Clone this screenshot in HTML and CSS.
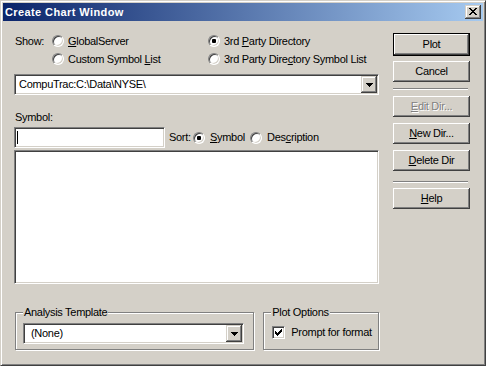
FILE: index.html
```html
<!DOCTYPE html>
<html>
<head>
<meta charset="utf-8">
<title>Create Chart Window</title>
<link rel="stylesheet" href="styles.css">
</head>
<body>
<div class="window">
  <div class="titlebar">
    <span class="title">Create Chart Window</span>
    <span class="tbtn"><svg width="8" height="7" viewBox="0 0 8 7" shape-rendering="crispEdges"><path fill="#000" d="M0 0h2v1h-2z M6 0h2v1h-2z M1 1h2v1h-2z M5 1h2v1h-2z M2 2h4v1h-4z M3 3h2v1h-2z M2 4h4v1h-4z M1 5h2v1h-2z M5 5h2v1h-2z M0 6h2v1h-2z M6 6h2v1h-2z"/></svg></span>
  </div>
  <div class="client">
    <div class="main">
      <div class="show">
        <span class="show-label">Show:</span>
        <span class="radio"><span class="rb"></span><span><u>G</u>lobalServer</span></span>
        <span class="radio"><span class="rb on"></span><span>3rd <u>P</u>arty Directory</span></span>
        <span></span>
        <span class="radio"><span class="rb"></span><span>Custom Symbol <u>L</u>ist</span></span>
        <span class="radio"><span class="rb"></span><span>3rd Party Dire<u>c</u>tory Symbol List</span></span>
      </div>
      <div class="combo wide">
        <span class="combo-text">CompuTrac:C:\Data\NYSE\</span>
        <span class="drop"><svg width="7" height="4" viewBox="0 0 7 4" shape-rendering="crispEdges"><path fill="#000" d="M0 0h7v1h-1v1h-1v1h-1v1h-1v-1h-1v-1h-1v-1h-1z"/></svg></span>
      </div>
      <div class="label">Symbol:</div>
      <div class="symrow">
        <div class="field input"><span class="caret"></span></div>
        <span class="sort">Sort:</span>
        <span class="radio r-sym"><span class="rb on"></span><span><u>S</u>ymbol</span></span>
        <span class="radio r-desc"><span class="rb"></span><span>Des<u>c</u>ription</span></span>
      </div>
      <div class="field listbox"></div>
      <div class="groups">
        <div class="group g-analysis">
          <span class="legend">Analysis Template</span>
          <div class="combo small">
            <span class="combo-text">(None)</span>
            <span class="drop"><svg width="7" height="4" viewBox="0 0 7 4" shape-rendering="crispEdges"><path fill="#000" d="M0 0h7v1h-1v1h-1v1h-1v1h-1v-1h-1v-1h-1v-1h-1z"/></svg></span>
          </div>
        </div>
        <div class="group g-plot">
          <span class="legend">Plot Options</span>
          <div class="check-row">
            <span class="cb"><svg width="7" height="7" viewBox="0 0 7 7" shape-rendering="crispEdges"><path fill="#000" d="M6 0h1v1h-1z M5 1h2v1h-2z M0 2h1v1h-1z M4 2h3v1h-3z M0 3h2v1h-2z M3 3h3v1h-3z M0 4h5v1h-5z M1 5h3v1h-3z M2 6h1v1h-1z"/></svg></span>
            <span>Prompt for format</span>
          </div>
        </div>
      </div>
    </div>
    <div class="buttons">
      <div class="btn default">Plot</div>
      <div class="btn b-cancel">Cancel</div>
      <div class="sep s1"></div>
      <div class="btn disabled b-edit"><span><u>E</u>dit Dir...</span></div>
      <div class="btn b-new"><span><u>N</u>ew Dir...</span></div>
      <div class="btn b-del"><span><u>D</u>elete Dir</span></div>
      <div class="sep s2"></div>
      <div class="btn b-help"><span><u>H</u>elp</span></div>
    </div>
  </div>
</div>
</body>
</html>
```
FILE: styles.css
```css
* { box-sizing: border-box; }
html, body { margin: 0; padding: 0; background: #d4d0c8; }
body {
  font-family: "Liberation Sans", Arial, sans-serif;
  font-size: 11px;
  letter-spacing: -0.3px;
  line-height: 13px;
  color: #000;
}
u { text-decoration-thickness: 1px; text-underline-offset: 1px; }

.window {
  width: 486px;
  height: 366px;
  border: 1px solid;
  border-color: #d4d0c8 #404040 #404040 #d4d0c8;
  box-shadow: inset 1px 1px #fff, inset -1px -1px #808080;
  padding: 2px;
  background: #d4d0c8;
  display: flex;
  flex-direction: column;
}

.titlebar {
  height: 18px;
  flex: none;
  display: flex;
  align-items: flex-start;
  padding: 0 2px;
  background: linear-gradient(to right, #0a246a, #a6caf0);
}
.title {
  color: #fff;
  font-weight: bold;
  letter-spacing: 0.4px;
  line-height: 18px;
  white-space: nowrap;
}
.tbtn {
  margin-left: auto;
  margin-top: 2px;
  width: 16px;
  height: 14px;
  padding: 3px 0 0 4px;
  background: #d4d0c8;
  box-shadow: inset -1px -1px #404040, inset 1px 1px #d4d0c8, inset -2px -2px #808080, inset 2px 2px #fff;
  display: flex;
  align-items: flex-start;
}
.tbtn svg { display: block; }

.client {
  flex: 1;
  display: flex;
  padding-left: 11px;
}
.main { width: 365px; flex: none; }

.show {
  display: grid;
  grid-template-columns: 38px 156px 1fr;
  grid-auto-rows: 18px;
  margin-top: 11px;
}
.show-label { padding-left: 1px; line-height: 18px; }

.radio {
  display: flex;
  align-items: center;
  gap: 4px;
  white-space: nowrap;
}
.rb {
  width: 12px;
  height: 12px;
  flex: none;
  border-radius: 50%;
  background: #fff;
  border: 1px solid;
  border-color: #808080 #fff #fff #808080;
  box-shadow: inset 1px 1px #404040, inset -1px -1px #d4d0c8;
  display: flex;
  align-items: center;
  justify-content: center;
}
.rb.on::after {
  content: "";
  width: 4px;
  height: 4px;
  border-radius: 1px;
  background: #000;
}

.combo {
  display: flex;
  align-items: center;
  height: 21px;
  padding: 1px;
  background: #fff;
  border: 1px solid;
  border-color: #808080 #fff #fff #808080;
  box-shadow: inset 1px 1px #404040, inset -1px -1px #d4d0c8;
}
.combo.wide { margin-top: 6px; width: 365px; }
.combo-text { flex: 1; padding-left: 3px; line-height: 17px; white-space: nowrap; }
.drop {
  width: 16px;
  height: 17px;
  flex: none;
  background: #d4d0c8;
  box-shadow: inset -1px -1px #404040, inset 1px 1px #d4d0c8, inset -2px -2px #808080, inset 2px 2px #fff;
  display: flex;
  align-items: center;
  justify-content: center;
}
.drop svg { display: block; }

.label { margin-top: 16px; padding-left: 1px; }

.field {
  background: #fff;
  border: 1px solid;
  border-color: #808080 #fff #fff #808080;
  box-shadow: inset 1px 1px #404040, inset -1px -1px #d4d0c8;
}
.symrow {
  display: flex;
  align-items: center;
  height: 21px;
  margin-top: 3px;
}
.input {
  width: 151px;
  height: 21px;
  flex: none;
  display: flex;
  align-items: center;
  padding-left: 2px;
}
.caret { width: 1px; height: 13px; background: #000; }
.sort { width: 24px; margin-left: 4px; flex: none; }
.symrow .radio { gap: 5px; }
.r-sym { width: 57px; flex: none; }

.listbox { margin-top: 2px; height: 134px; }

.groups { display: flex; margin-top: 28px; }
.group {
  height: 38px;
  border: 1px solid #808080;
  box-shadow: inset 1px 1px #fff, 1px 1px #fff;
}
.g-analysis { width: 240px; margin-left: 1px; }
.g-plot { width: 116px; margin-left: 9px; }
.legend {
  display: block;
  width: fit-content;
  margin: -7px 0 0 7px;
  padding: 0 1px;
  line-height: 13px;
  background: #d4d0c8;
  white-space: nowrap;
}
.combo.small { width: 221px; margin: 4px 0 0 7px; }
.combo.small .combo-text { padding-left: 6px; }

.check-row {
  display: flex;
  align-items: center;
  gap: 6px;
  height: 21px;
  margin: 3px 0 0 8px;
  white-space: nowrap;
}
.cb {
  width: 13px;
  height: 13px;
  flex: none;
  background: #fff;
  border: 1px solid;
  border-color: #808080 #fff #fff #808080;
  box-shadow: inset 1px 1px #404040, inset -1px -1px #d4d0c8;
  display: flex;
  align-items: center;
  justify-content: center;
}
.cb svg { display: block; }

.buttons {
  width: 77px;
  flex: none;
  margin-left: 14px;
  padding-top: 12px;
}
.btn {
  height: 21px;
  display: flex;
  align-items: center;
  justify-content: center;
  white-space: nowrap;
  background: #d4d0c8;
  box-shadow: inset -1px -1px #404040, inset 1px 1px #fff, inset -2px -2px #808080, inset 2px 2px #d4d0c8;
}
.btn.default { height: 23px; border: 1px solid #000; }
.b-cancel { margin-top: 5px; }
.b-edit { margin-top: 6px; }
.b-new { margin-top: 6px; }
.b-del { margin-top: 6px; }
.b-help { margin-top: 5px; }
.btn.disabled { color: #808080; text-shadow: 1px 1px 0 #fff; }
.sep {
  width: 75px;
  height: 2px;
  border-top: 1px solid #808080;
  border-bottom: 1px solid #fff;
}
.s1 { margin-top: 6px; }
.s2 { margin-top: 10px; }
```
